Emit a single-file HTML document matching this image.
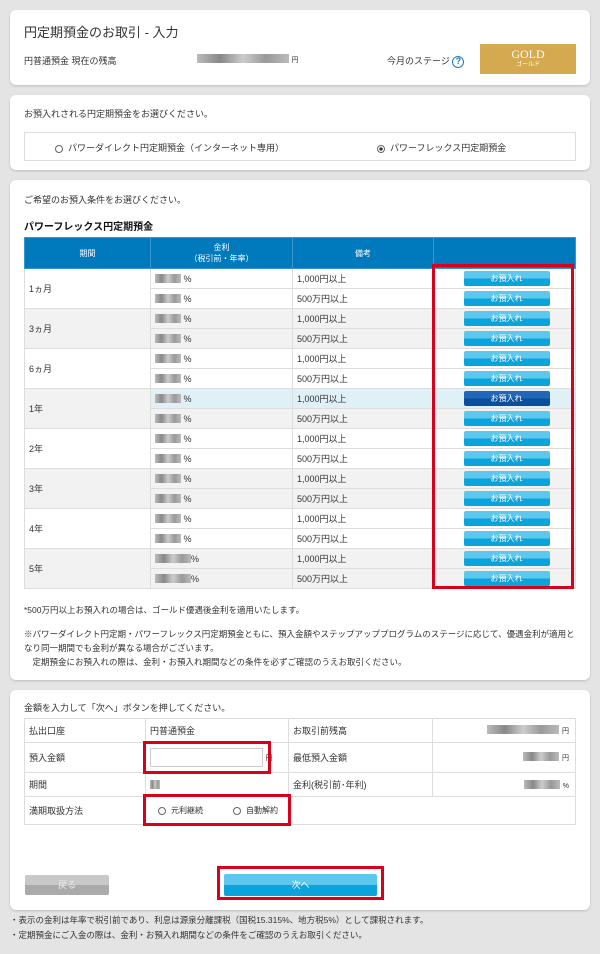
<!DOCTYPE html>
<html><head><meta charset="utf-8"><style>
*{margin:0;padding:0;box-sizing:border-box}
body{width:600px;height:954px;background:#e4e4e4;font-family:"Liberation Sans","Noto Sans CJK JP",sans-serif;font-size:9px;color:#333;position:relative;overflow:hidden}
.p{position:absolute;left:10px;width:580px;background:#fff;border-radius:6px;box-shadow:0 1px 2px #bbb}
.a{position:absolute}
.blur{display:inline-block;background:linear-gradient(90deg,#bbb,#888,#ccc,#999,#bbb);height:9px;vertical-align:-1px}
table{border-collapse:collapse}
.rt td{border:1px solid #ddd;height:20px;padding-left:4px;font-size:9px}
.btn{display:block;margin:0 auto;width:86px;height:15px;border-radius:2px;background:linear-gradient(#5cc8ee 50%,#0aa3dc 50%);color:#fff;text-align:center;line-height:15px;font-size:8px}
.btn.d{background:linear-gradient(#2067b8 50%,#0a4f9e 50%)}
.red{position:absolute;border:3px solid #d9001b}
.ft td{border:1px solid #ddd;padding-left:4px;font-size:9px}
.rad{display:inline-block;width:8px;height:8px;border:1px solid #666;border-radius:50%;vertical-align:middle;margin-right:5px}
</style></head><body>
<div class="p" style="top:10px;height:75px">
 <div class="a" style="left:14px;top:12px;font-size:13px">円定期預金のお取引 - 入力</div>
 <div class="a" style="left:14px;top:44px">円普通預金 現在の残高</div>
 <div class="a" style="left:187px;top:44px"><span class="blur" style="width:92px"></span> <span style="font-size:7px">円</span></div>
 <div class="a" style="left:377px;top:44px">今月のステージ <span style="display:inline-block;width:12px;height:12px;border:1.5px solid #1a7cc7;border-radius:50%;color:#1a7cc7;text-align:center;line-height:9px;font-size:9px;font-weight:bold">?</span></div>
 <div class="a" style="left:470px;top:34px;width:96px;height:30px;background:#d4a94f;color:#fff;text-align:center;font-family:'Liberation Serif',serif;font-size:12px;line-height:14px;padding-top:3px">GOLD<br><span style="font-size:6px;line-height:8px;display:block">ゴールド</span></div>
</div>
<div class="p" style="top:95px;height:75px">
 <div class="a" style="left:14px;top:12px">お預入れされる円定期預金をお選びください。</div>
 <div class="a" style="left:14px;top:37px;width:552px;height:29px;border:1px solid #ddd">
  <div class="a" style="left:30px;top:8px"><span class="rad"></span>パワーダイレクト円定期預金（インターネット専用）</div>
  <div class="a" style="left:352px;top:8px"><span class="rad" style="background:radial-gradient(#333 35%,#fff 45%)"></span>パワーフレックス円定期預金</div>
 </div>
</div>
<div class="p" style="top:180px;height:500px">
 <div class="a" style="left:14px;top:13px">ご希望のお預入条件をお選びください。</div>
 <div class="a" style="left:14px;top:38px;font-size:10px;font-weight:bold;color:#111">パワーフレックス円定期預金</div>
 <table class="a rt" style="left:14px;top:57px;width:552px">
  <tr style="background:#0079bd;color:#fff;text-align:center"><td style="width:126px;height:31px;border-color:#3a97cc;padding:0;font-size:8px">期間</td><td style="width:142px;border-color:#3a97cc;padding:0;font-size:8px">金利<br>（税引前・年率）</td><td style="width:141px;border-color:#3a97cc;padding:0;font-size:8px">備考</td><td style="border-color:#3a97cc"></td></tr>
  <tr><td rowspan="2">1ヵ月</td><td><span class="blur" style="width:26px"></span> %</td><td>1,000円以上</td><td><span class="btn">お預入れ</span></td></tr>
  <tr><td><span class="blur" style="width:26px"></span> %</td><td>500万円以上</td><td><span class="btn">お預入れ</span></td></tr>
  <tr style="background:#f2f2f2"><td rowspan="2">3ヵ月</td><td><span class="blur" style="width:26px"></span> %</td><td>1,000円以上</td><td><span class="btn">お預入れ</span></td></tr>
  <tr style="background:#f2f2f2"><td><span class="blur" style="width:26px"></span> %</td><td>500万円以上</td><td><span class="btn">お預入れ</span></td></tr>
  <tr><td rowspan="2">6ヵ月</td><td><span class="blur" style="width:26px"></span> %</td><td>1,000円以上</td><td><span class="btn">お預入れ</span></td></tr>
  <tr><td><span class="blur" style="width:26px"></span> %</td><td>500万円以上</td><td><span class="btn">お預入れ</span></td></tr>
  <tr style="background:#f2f2f2"><td rowspan="2">1年</td><td style="background:#dff0f7"><span class="blur" style="width:26px"></span> %</td><td style="background:#dff0f7">1,000円以上</td><td style="background:#dff0f7"><span class="btn d">お預入れ</span></td></tr>
  <tr style="background:#f2f2f2"><td><span class="blur" style="width:26px"></span> %</td><td>500万円以上</td><td><span class="btn">お預入れ</span></td></tr>
  <tr><td rowspan="2">2年</td><td><span class="blur" style="width:26px"></span> %</td><td>1,000円以上</td><td><span class="btn">お預入れ</span></td></tr>
  <tr><td><span class="blur" style="width:26px"></span> %</td><td>500万円以上</td><td><span class="btn">お預入れ</span></td></tr>
  <tr style="background:#f2f2f2"><td rowspan="2">3年</td><td><span class="blur" style="width:26px"></span> %</td><td>1,000円以上</td><td><span class="btn">お預入れ</span></td></tr>
  <tr style="background:#f2f2f2"><td><span class="blur" style="width:26px"></span> %</td><td>500万円以上</td><td><span class="btn">お預入れ</span></td></tr>
  <tr><td rowspan="2">4年</td><td><span class="blur" style="width:26px"></span> %</td><td>1,000円以上</td><td><span class="btn">お預入れ</span></td></tr>
  <tr><td><span class="blur" style="width:26px"></span> %</td><td>500万円以上</td><td><span class="btn">お預入れ</span></td></tr>
  <tr style="background:#f2f2f2"><td rowspan="2">5年</td><td><span class="blur" style="width:36px"></span>%</td><td>1,000円以上</td><td><span class="btn">お預入れ</span></td></tr>
  <tr style="background:#f2f2f2"><td><span class="blur" style="width:36px"></span>%</td><td>500万円以上</td><td><span class="btn">お預入れ</span></td></tr>
 </table>
 <div class="a" style="left:14px;top:424px;font-size:8.5px">*500万円以上お預入れの場合は、ゴールド優遇後金利を適用いたします。</div>
 <div class="a" style="left:14px;top:447px;font-size:8.5px;line-height:14px;width:556px">※パワーダイレクト円定期・パワーフレックス円定期預金ともに、預入金額やステップアッププログラムのステージに応じて、優遇金利が適用となり同一期間でも金利が異なる場合がございます。<br>　定期預金にお預入れの際は、金利・お預入れ期間などの条件を必ずご確認のうえお取引ください。</div>
</div>
<div class="red" style="left:432px;top:264px;width:142px;height:325px"></div>
<div class="p" style="top:690px;height:220px">
 <div class="a" style="left:14px;top:11px">金額を入力して「次へ」ボタンを押してください。</div>
 <table class="a ft" style="left:14px;top:28px;width:552px">
  <tr style="height:24px"><td style="width:121px">払出口座</td><td style="width:143px">円普通預金</td><td style="width:144px">お取引前残高</td><td style="text-align:right;padding-right:6px"><span class="blur" style="width:72px"></span> <span style="font-size:7px">円</span></td></tr>
  <tr style="height:30px"><td>預入金額</td><td><span style="display:inline-block;width:113px;height:19px;border:1px solid #ccc;vertical-align:middle"></span> <span style="font-size:7px">円</span></td><td>最低預入金額</td><td style="text-align:right;padding-right:6px"><span class="blur" style="width:36px"></span> <span style="font-size:7px">円</span></td></tr>
  <tr style="height:24px"><td>期間</td><td><span class="blur" style="width:10px"></span></td><td>金利(税引前･年利)</td><td style="text-align:right;padding-right:6px"><span class="blur" style="width:36px"></span> <span style="font-size:7px">%</span></td></tr>
  <tr style="height:28px"><td>満期取扱方法</td><td colspan="3" style="font-size:8px"><span style="margin-left:8px" class="rad"></span>元利継続<span style="margin-left:30px" class="rad"></span>自動解約</td></tr>
 </table>
 <div class="a" style="left:15px;top:185px;width:84px;height:20px;background:linear-gradient(#c8c8c8 50%,#aaa 50%);color:#eee;text-align:center;line-height:20px;border-radius:2px">戻る</div>
 <div class="a" style="left:214px;top:184px;width:153px;height:22px;background:linear-gradient(#5cc8ee 50%,#0aa3dc 50%);color:#fff;text-align:center;line-height:22px;border-radius:2px">次へ</div>
</div>
<div class="red" style="left:143px;top:741px;width:128px;height:33px"></div>
<div class="red" style="left:143px;top:794px;width:148px;height:32px"></div>
<div class="red" style="left:217px;top:866px;width:167px;height:34px"></div>
<div class="a" style="left:10px;top:913px;font-size:8.5px;line-height:15px">・表示の金利は年率で税引前であり、利息は源泉分離課税（国税15.315%、地方税5%）として課税されます。<br>・定期預金にご入金の際は、金利・お預入れ期間などの条件をご確認のうえお取引ください。</div>
</body></html>
